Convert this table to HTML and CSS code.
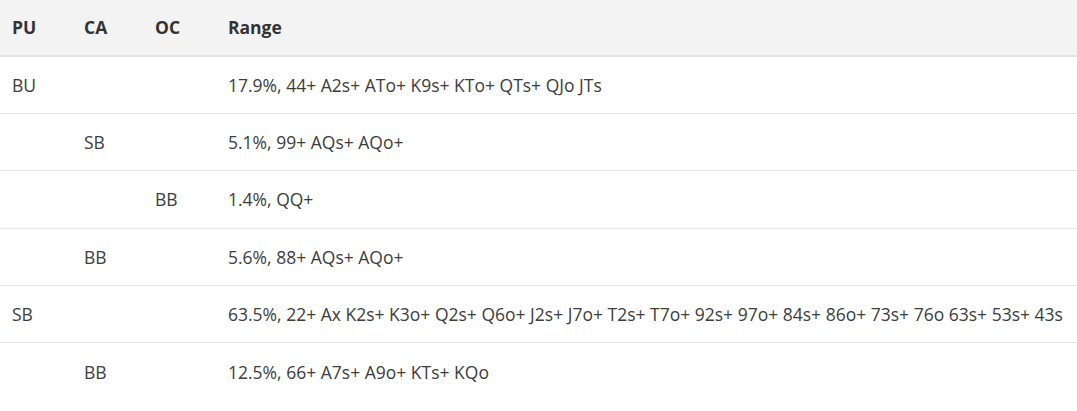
FILE: index.html
```html
<!DOCTYPE html>
<html lang="en">
<head>
    <meta charset="UTF-8">
    <title>Ranges</title>
    <link rel="stylesheet" href="styles.css">
</head>
<body>
    <table class="ranges">
        <thead>
            <tr>
                <th class="col-pu">PU</th>
                <th class="col-ca">CA</th>
                <th class="col-oc">OC</th>
                <th>Range</th>
            </tr>
        </thead>
        <tbody>
            <tr>
                <td>BU</td>
                <td></td>
                <td></td>
                <td>17.9%, 44+ A2s+ ATo+ K9s+ KTo+ QTs+ QJo JTs</td>
            </tr>
            <tr>
                <td></td>
                <td>SB</td>
                <td></td>
                <td>5.1%, 99+ AQs+ AQo+</td>
            </tr>
            <tr>
                <td></td>
                <td></td>
                <td>BB</td>
                <td>1.4%, QQ+</td>
            </tr>
            <tr>
                <td></td>
                <td>BB</td>
                <td></td>
                <td>5.6%, 88+ AQs+ AQo+</td>
            </tr>
            <tr>
                <td>SB</td>
                <td></td>
                <td></td>
                <td>63.5%, 22+ Ax K2s+ K3o+ Q2s+ Q6o+ J2s+ J7o+ T2s+ T7o+ 92s+ 97o+ 84s+ 86o+ 73s+ 76o 63s+ 53s+ 43s</td>
            </tr>
            <tr>
                <td></td>
                <td>BB</td>
                <td></td>
                <td>12.5%, 66+ A7s+ A9o+ KTs+ KQo</td>
            </tr>
        </tbody>
    </table>
</body>
</html>
```

FILE: styles.css
```css
body {
    margin: 0;
    padding: 0;
    background: #fff;
    font-family: 'Open Sans', sans-serif;
    font-size: 17.5px;
    color: #3d3d3d;
}

.ranges {
    width: 100%;
    border-collapse: collapse;
    table-layout: fixed;
}

.ranges th,
.ranges td {
    text-align: left;
    padding: 0 12px;
    white-space: nowrap;
}

.ranges th {
    height: 54.5px;
    background: #f3f3f3;
    border-bottom: 2px solid #e4e4e4;
    font-weight: bold;
    color: #333;
}

.ranges td {
    height: 56.4px;
    border-bottom: 1px solid #e6e6e6;
}

.ranges tbody tr:last-child td {
    border-bottom: none;
}

.col-pu {
    width: 48px;
}

.col-ca {
    width: 47px;
}

.col-oc {
    width: 49px;
}
```
